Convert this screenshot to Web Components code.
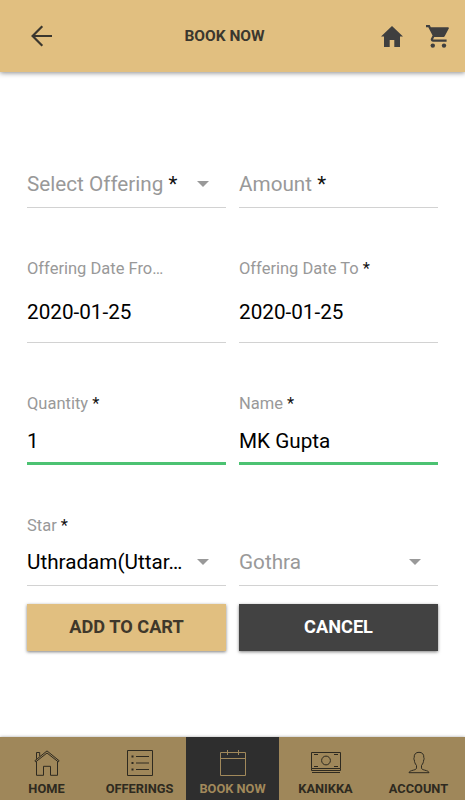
<!DOCTYPE html>
<html lang="en">
<head>
<meta charset="utf-8">
<meta name="viewport" content="width=device-width, initial-scale=1">
<title>Book Now</title>
<style>
    body {
        margin: 0;
        height: 800px;
        overflow: hidden;
        background: #fff;
        font-family: Roboto, "Liberation Sans", sans-serif;
        color: #000;
    }
</style>
</head>
<body>
<booking-page></booking-page>

<script>
const icons = {
    back: `<svg width="22" height="22" viewBox="0 0 22 22" fill="none" stroke="#3b372e" stroke-width="2.2"><path d="M21 11H2M11.3 1.3L1.6 11l9.700 9.700"/></svg>`,
    home: `<svg width="22" height="21" viewBox="0 0 22 21" fill="#3f3f3f"><path d="M11 0L0 10.500h3V21h5.700v-7h4.600v7H19V10.500h3z"/></svg>`,
    cart: `<svg width="23" height="23" viewBox="0 0 23 23" fill="#3f3f3f"><path d="M0 0h3.7l1.1 2.3H22c.7 0 1.1.7.8 1.3l-4 7.3c-.4.8-1.2 1.2-2 1.2H8.2l-1 1.9c-.1.3 0 .5.3.5h13.1v2.2H7c-1.8 0-2.8-1.800-2-3.300l1.600-2.800L2.300 2.300H0z"/><circle cx="6.800" cy="20.600" r="2.200"/><circle cx="18" cy="20.600" r="2.200"/></svg>`,
    tabHome: `<svg width="26" height="26" viewBox="0 0 26 26" fill="none" stroke="currentColor" stroke-width="1"><path d="M.8 10.8L13 .9l12.2 9.9-1 1L13 3 1.800 11.800zM2.500 8.800V2.500h3.200v3.700M2.500 11.500v13.800h7v-9h7v9h7V11.500"/></svg>`,
    tabList: `<svg width="26" height="26" viewBox="0 0 26 26" fill="none" stroke="currentColor" stroke-width="1"><path d="M.5.5h25v25H.5zM9 6.500h13M9 13h13M9 19.500h13"/><path d="M4.500 6.500h2M4.500 13h2M4.500 19.500h2" stroke-width="2"/></svg>`,
    tabCalendar: `<svg width="26" height="26" viewBox="0 0 26 26" fill="none" stroke="currentColor" stroke-width="1"><path d="M.5 2.500h25v23H.5zM.5 8.500h25M7.500 0v5M18.500 0v5"/></svg>`,
    tabCash: `<svg width="30" height="26" viewBox="0 0 30 26" fill="none" stroke="currentColor" stroke-width="1"><path d="M.5 2.500h29v16H.5zM.5 18.500v2h29v-2M1 22.500h28M3 4.500h4M23 4.500h4M3 16.500h4M23 16.500h4"/><circle cx="15" cy="10.500" r="4.400"/></svg>`,
    tabUser: `<svg width="22" height="26" viewBox="0 0 22 26" fill="none" stroke="currentColor" stroke-width="1"><path d="M8.500 15.500C6.900 13.500 6.500 12 6.300 10 5.600 9 5.900 8 6.200 7.500 6 4.200 7.800 2.300 11 2.300s5 1.900 4.800 5.200c.3.500.6 1.500-.1 2.500-.2 2-.6 3.500-2.200 5.500v2.400c0 1.200 1 1.600 3 2.200 3 .8 4.300 1.300 4.500 2.600H1c.2-1.300 1.500-1.800 4.500-2.600 2-.6 3-1 3-2.200z"/></svg>`
};

class AppHeader extends HTMLElement {
    connectedCallback() {
        this.attachShadow({ mode: 'open' });
        this.shadowRoot.innerHTML = `
            <style>
                :host {
                    display: grid;
                    grid-template-columns: 1fr auto 1fr;
                    align-items: center;
                    box-sizing: border-box;
                    height: 72px;
                    padding: 0 16px;
                    background: #e1bf80;
                    box-shadow: 0 1px 5px rgba(0, 0, 0, 0.45);
                }
                svg { display: block; }
                .back { padding-left: 15px; }
                .title {
                    font-size: 15.5px;
                    font-weight: 700;
                    color: #3b372e;
                    margin-right: 16px;
                }
                .actions {
                    display: flex;
                    justify-content: flex-end;
                    align-items: center;
                    gap: 23px;
                }
            </style>
            <div class="back">${icons.back}</div>
            <div class="title"><slot></slot></div>
            <div class="actions">${icons.home}${icons.cart}</div>
        `;
    }
}

// attributes: label, value, placeholder, required, select, valid
class FormField extends HTMLElement {
    connectedCallback() {
        const label = this.getAttribute('label');
        const value = this.getAttribute('value');
        const placeholder = this.getAttribute('placeholder');
        const star = this.hasAttribute('required') ? ' <b>*</b>' : '';

        this.attachShadow({ mode: 'open' });
        this.shadowRoot.innerHTML = `
            <style>
                :host {
                    display: flex;
                    flex-direction: column;
                    justify-content: flex-end;
                    box-sizing: border-box;
                    padding-bottom: var(--field-bottom, 11px);
                    border-bottom: 1px solid #d2d2d2;
                    min-width: 0;
                }
                :host([valid]) { border-bottom: 3px solid #4cc272; }
                .label {
                    font-size: 16.5px;
                    line-height: 20px;
                    margin-bottom: var(--label-gap, 14px);
                    color: #999;
                    white-space: nowrap;
                }
                .row {
                    display: flex;
                    align-items: center;
                    justify-content: space-between;
                    padding-right: 17px;
                    font-size: 20.7px;
                    line-height: 24px;
                    white-space: nowrap;
                }
                .placeholder { color: #999; }
                b { font-weight: 400; color: #111; }
                .caret {
                    border: 6.5px solid transparent;
                    border-top: 6.5px solid #999;
                    border-bottom: 0;
                    margin-top: -1px;
                }
            </style>
            ${label ? `<div class="label">${label}${star}</div>` : ''}
            <div class="row">
                ${value ? `<span>${value}</span>` : `<span class="placeholder">${placeholder}${star}</span>`}
                ${this.hasAttribute('select') ? '<i class="caret"></i>' : ''}
            </div>
        `;
    }
}

class ActionButton extends HTMLElement {
    connectedCallback() {
        this.attachShadow({ mode: 'open' });
        this.shadowRoot.innerHTML = `
            <style>
                :host {
                    display: flex;
                    align-items: center;
                    justify-content: center;
                    box-sizing: border-box;
                    padding-bottom: 2px;
                    background: #e1bf80;
                    color: #3f382b;
                    font-size: 18.2px;
                    font-weight: 700;
                    box-shadow: 0 1px 3px rgba(0, 0, 0, 0.5);
                }
                :host([dark]) {
                    background: #424242;
                    color: #fff;
                }
            </style>
            <slot></slot>
        `;
    }
}

class TabItem extends HTMLElement {
    connectedCallback() {
        this.attachShadow({ mode: 'open' });
        this.shadowRoot.innerHTML = `
            <style>
                :host {
                    display: flex;
                    flex-direction: column;
                    align-items: center;
                    gap: 5px;
                    padding-top: 13px;
                    color: #2e2a20;
                    font-size: 12.8px;
                    font-weight: 700;
                    line-height: 16px;
                    white-space: nowrap;
                }
                :host([active]) {
                    background: #2e2e2e;
                    color: #a1895b;
                }
                svg { display: block; }
            </style>
            ${icons[this.getAttribute('icon')]}
            <div><slot></slot></div>
        `;
    }
}

class BookingPage extends HTMLElement {
    connectedCallback() {
        this.attachShadow({ mode: 'open' });
        this.shadowRoot.innerHTML = `
            <style>
                :host {
                    display: flex;
                    flex-direction: column;
                    height: 800px;
                }
                .form {
                    flex: 1;
                    display: grid;
                    grid-template-columns: 199px 199px;
                    grid-template-rows: 136px 135px 122px 121px 65px;
                    column-gap: 13px;
                    padding: 0 27px;
                }
                .date { --field-bottom: 18px; --label-gap: 21px; }
                .text { --field-bottom: 9px; --label-gap: 15px; }
                .buttons { margin-top: 18px; height: 47px; }
                .tabs {
                    display: grid;
                    grid-template-columns: repeat(5, 1fr);
                    height: 63px;
                    background: #9f875a;
                    box-shadow: 0 0 3px rgba(0, 0, 0, 0.35);
                }
            </style>
            <app-header>BOOK NOW</app-header>
            <div class="form">
                <form-field placeholder="Select Offering" required select></form-field>
                <form-field placeholder="Amount" required></form-field>
                <form-field class="date" label="Offering Date Fro…" value="2020-01-25"></form-field>
                <form-field class="date" label="Offering Date To" value="2020-01-25" required></form-field>
                <form-field class="text" label="Quantity" value="1" required valid></form-field>
                <form-field class="text" label="Name" value="MK Gupta" required valid></form-field>
                <form-field label="Star" value="Uthradam(Uttar…" required select></form-field>
                <form-field placeholder="Gothra" select></form-field>
                <action-button class="buttons">ADD TO CART</action-button>
                <action-button class="buttons" dark>CANCEL</action-button>
            </div>
            <div class="tabs">
                <tab-item icon="tabHome">HOME</tab-item>
                <tab-item icon="tabList">OFFERINGS</tab-item>
                <tab-item icon="tabCalendar" active>BOOK NOW</tab-item>
                <tab-item icon="tabCash">KANIKKA</tab-item>
                <tab-item icon="tabUser">ACCOUNT</tab-item>
            </div>
        `;
    }
}

customElements.define('app-header', AppHeader);
customElements.define('form-field', FormField);
customElements.define('action-button', ActionButton);
customElements.define('tab-item', TabItem);
customElements.define('booking-page', BookingPage);
</script>
</body>
</html>
